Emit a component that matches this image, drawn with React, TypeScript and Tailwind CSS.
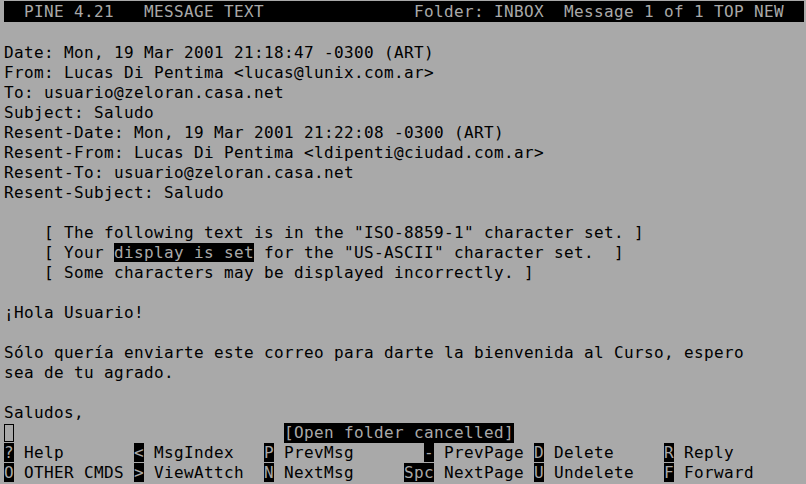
import React from "react";

type Seg = [string, boolean];

function Line({ segs }: { segs: Seg[] }) {
  return (
    <div className="h-[20px] leading-[20px] whitespace-pre">
      {segs.map(([t, inv], i) =>
        inv ? (
          <span key={i} className="bg-black text-[#a9a9a9]">
            {t}
          </span>
        ) : (
          <span key={i}>{t}</span>
        )
      )}
    </div>
  );
}

const T = (s: string): Seg[] => [[s, false]];
const P = (s: string, n: number) => s.padEnd(n, " ");

export default function App() {
  const rows: Seg[][] = [
    T(""),
    T("Date: Mon, 19 Mar 2001 21:18:47 -0300 (ART)"),
    T("From: Lucas Di Pentima <lucas@lunix.com.ar>"),
    T("To: usuario@zeloran.casa.net"),
    T("Subject: Saludo"),
    T("Resent-Date: Mon, 19 Mar 2001 21:22:08 -0300 (ART)"),
    T("Resent-From: Lucas Di Pentima <ldipenti@ciudad.com.ar>"),
    T("Resent-To: usuario@zeloran.casa.net"),
    T("Resent-Subject: Saludo"),
    T(""),
    T('    [ The following text is in the "ISO-8859-1" character set. ]'),
    [
      ["    [ Your ", false],
      ["display is set", true],
      [' for the "US-ASCII" character set.  ]', false],
    ],
    T("    [ Some characters may be displayed incorrectly. ]"),
    T(""),
    T("¡Hola Usuario!"),
    T(""),
    T("Sólo quería enviarte este correo para darte la bienvenida al Curso, espero"),
    T("sea de tu agrado."),
    T(""),
    T("Saludos,"),
  ];

  const menu1: Seg[] = [
    ["?", true],
    [P(" Help", 12), false],
    ["<", true],
    [P(" MsgIndex", 12), false],
    ["P", true],
    [P(" PrevMsg", 15), false],
    ["-", true],
    [P(" PrevPage", 10), false],
    ["D", true],
    [P(" Delete", 12), false],
    ["R", true],
    [" Reply", false],
  ];
  const menu2: Seg[] = [
    ["O", true],
    [P(" OTHER CMDS", 12), false],
    [">", true],
    [P(" ViewAttch", 12), false],
    ["N", true],
    [P(" NextMsg", 13), false],
    ["Spc", true],
    [P(" NextPage", 10), false],
    ["U", true],
    [P(" Undelete", 12), false],
    ["F", true],
    [" Forward", false],
  ];

  const title = P(P("  PINE 4.21   MESSAGE TEXT", 41) + "Folder: INBOX  Message 1 of 1 TOP NEW", 80);

  return (
    <div
      className="w-[806px] h-[484px] overflow-hidden bg-[#a9a9a9] text-black pt-[1px] pl-[4px] text-[16px] tracking-[0.367px]"
      style={{ fontFamily: '"DejaVu Sans Mono", "Liberation Mono", monospace' }}
    >
      <div className="w-[800px] h-[21px] leading-[22px] bg-black text-[#a9a9a9] whitespace-pre overflow-hidden">
        {title}
      </div>
      <div className="pt-[1px]">
        {rows.map((r, i) => (
          <Line key={i} segs={r} />
        ))}
        <div className="h-[20px] leading-[20px] whitespace-pre flex items-center">
          <span className="inline-block w-[10px] h-[18px] border border-black box-border" />
          <span>{P("", 27)}</span>
          <span className="bg-black text-[#a9a9a9]">[Open folder cancelled]</span>
        </div>
        <Line segs={menu1} />
        <Line segs={menu2} />
      </div>
    </div>
  );
}
